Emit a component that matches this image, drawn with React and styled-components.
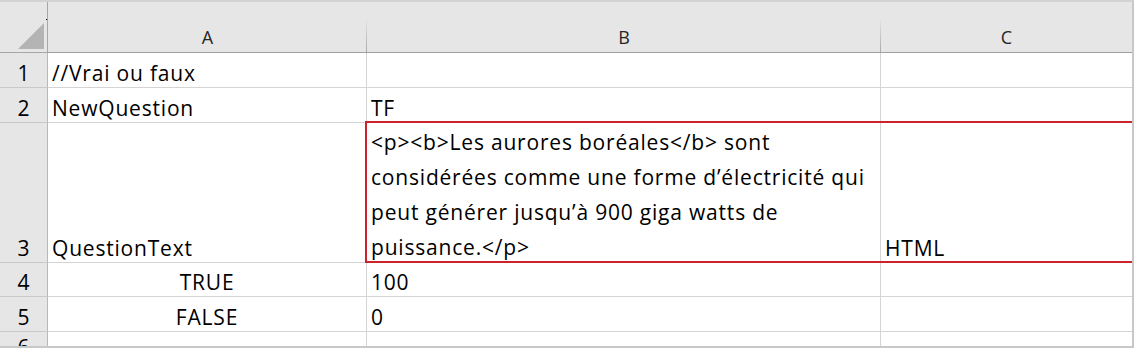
import React from "react";
import styled, { createGlobalStyle } from "styled-components";

const GlobalStyle = createGlobalStyle`
  html, body {
    margin: 0;
    padding: 0;
    background: #ffffff;
  }
  body {
    font-family: "Open Sans", "Liberation Sans", sans-serif;
  }
`;

const rows = [
  { n: 1, a: "//Vrai ou faux" },
  { n: 2, a: "NewQuestion", b: "TF" },
  {
    n: 3,
    a: "QuestionText",
    b: [
      "<p><b>Les aurores boréales</b> sont",
      "considérées comme une forme d’électricité qui",
      "peut générer jusqu’à 900 giga watts de",
      "puissance.</p>",
    ],
    c: "HTML",
  },
  { n: 4, a: "TRUE", center: true, b: "100" },
  { n: 5, a: "FALSE", center: true, b: "0" },
  { n: 6 },
];

function App() {
  return (
    <>
      <GlobalStyle />
      <Sheet>
        <Corner>
          <svg width="47" height="51" viewBox="0 0 47 51">
            <polygon points="44,21 44,47 18,47" fill="#b4b4b4" />
            <rect x="46" y="17" width="1" height="1" fill="#000" />
          </svg>
        </Corner>
        <ColHeader>A</ColHeader>
        <ColHeader>B</ColHeader>
        <ColHeader $last>C</ColHeader>
        {rows.map((r, i) => (
          <React.Fragment key={r.n}>
            <RowHeader $row={i + 2}>
              <Text>{r.n}</Text>
            </RowHeader>
            <Cell $row={i + 2} $col={2} $center={r.center}>
              {r.a && <Text>{r.a}</Text>}
            </Cell>
            <Cell $row={i + 2} $col={3}>
              {Array.isArray(r.b) ? (
                <Lines>
                  {r.b.map((line) => (
                    <Line key={line}>{line}</Line>
                  ))}
                </Lines>
              ) : (
                r.b && <Text>{r.b}</Text>
              )}
            </Cell>
            <Cell $row={i + 2} $col={4} $last>
              {r.c && <Text>{r.c}</Text>}
            </Cell>
          </React.Fragment>
        ))}
        <Selection />
      </Sheet>
    </>
  );
}

const Sheet = styled.div`
  display: grid;
  grid-template-columns: 48px 319px 514px 251px;
  grid-template-rows: 51px 35px 35px 140px 34px 35px 30px;
  height: 348px;
  box-sizing: border-box;
  border-top: 2px solid #d2d2d2;
  border-right: 2px solid #c8c8c8;
  border-bottom: 2px solid #c8c8c8;
  overflow: hidden;
  background: #ffffff;
  color: #000000;
  font-size: 21px;
  letter-spacing: 0.8px;
`;

const Corner = styled.div`
  background: #e6e6e6;
  border-right: 1px solid #a6a6a6;
  border-bottom: 1px solid #a6a6a6;
  svg {
    display: block;
  }
`;

const ColHeader = styled.div`
  display: flex;
  align-items: flex-end;
  justify-content: center;
  background-color: #e6e6e6;
  background-image: ${(p) =>
    p.$last ? "none" : "linear-gradient(to bottom, #e6e6e6, #a9a9a9)"};
  background-repeat: no-repeat;
  background-position: right bottom;
  background-size: 1px 34px;
  border-bottom: 1px solid #a0a0a0;
  font-size: 18px;
  letter-spacing: 0;
  line-height: 24px;
  padding-bottom: 3px;
  color: #262626;
`;

const RowHeader = styled.div`
  grid-row: ${(p) => p.$row};
  grid-column: 1;
  display: flex;
  align-items: flex-end;
  justify-content: center;
  background: #e6e6e6;
  border-right: 1px solid #b8b8b8;
  border-bottom: 1px solid #c9c9c9;
  letter-spacing: 0;
`;

const Cell = styled.div`
  grid-row: ${(p) => p.$row};
  grid-column: ${(p) => p.$col};
  display: flex;
  flex-direction: column;
  justify-content: flex-end;
  align-items: ${(p) => (p.$center ? "center" : "flex-start")};
  min-width: 0;
  padding: 0 4px;
  border-right: ${(p) => (p.$last ? "none" : "1px solid #d4d4d4")};
  border-bottom: 1px solid #d4d4d4;
  white-space: nowrap;
`;

const Text = styled.span`
  display: block;
  line-height: 35px;
  margin-bottom: -4px;
`;

const Lines = styled.div`
  display: flex;
  flex-direction: column;
  line-height: 35px;
  margin-bottom: -3px;
`;

const Line = styled.span`
  display: block;
`;

const Selection = styled.div`
  grid-row: 4;
  grid-column: 3 / 5;
  margin: -2px 0 0 -2px;
  border: 2px solid #cc2229;
  border-right: none;
  pointer-events: none;
  z-index: 1;
`;

export default App;
